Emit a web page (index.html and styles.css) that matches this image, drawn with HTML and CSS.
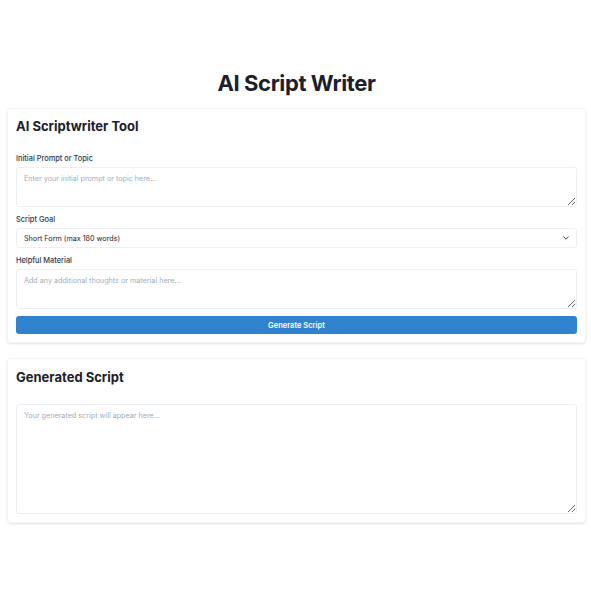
FILE: index.html
```html
<!DOCTYPE html>
<html lang="en">
<head>
<meta charset="utf-8">
<title>AI Script Writer</title>
<link rel="stylesheet" href="styles.css">
</head>
<body>
<main class="page">
  <h1 class="title">AI Script Writer</h1>
  <section class="card">
    <h2 class="card-title">AI Scriptwriter Tool</h2>
    <div class="group">
      <label class="label">Initial Prompt or Topic</label>
      <textarea class="field area-sm" placeholder="Enter your initial prompt or topic here..."></textarea>
    </div>
    <div class="group">
      <label class="label">Script Goal</label>
      <div class="select-wrap">
        <select class="field select">
          <option>Short Form (max 180 words)</option>
        </select>
        <svg class="chevron" viewBox="0 0 10 6" width="6" height="4"><path d="M1 1l4 4 4-4" fill="none" stroke="#2d3748" stroke-width="1.6" stroke-linecap="round" stroke-linejoin="round"/></svg>
      </div>
    </div>
    <div class="group group-last">
      <label class="label">Helpful Material</label>
      <textarea class="field area-sm" placeholder="Add any additional thoughts or material here..."></textarea>
    </div>
    <button class="btn">Generate Script</button>
  </section>
  <section class="card card-2">
    <h2 class="card-title">Generated Script</h2>
    <textarea class="field area-lg" placeholder="Your generated script will appear here..."></textarea>
  </section>
</main>
</body>
</html>
```
FILE: styles.css
```css
* { box-sizing: border-box; }
html, body { margin: 0; padding: 0; background: #ffffff; }
body { font-family: Inter, "Noto Sans", sans-serif; color: #1a202c; }
.page {
  padding: 69px 5px 0 7px;
  display: flex;
  flex-direction: column;
}
.title {
  margin: 0 0 11px;
  font-size: 22px;
  line-height: 28px;
  font-weight: 700;
  letter-spacing: -0.4px;
  text-align: center;
  color: #1a202c;
}
.card {
  border: 1px solid #f3f4f6;
  border-radius: 4px;
  box-shadow: 0 1px 3px rgba(0,0,0,0.08), 0 1px 2px rgba(0,0,0,0.04);
  padding: 9px 8px 8px;
  margin-bottom: 15px;
  display: flex;
  flex-direction: column;
}
.card-2 { padding-top: 10px; }
.card-title {
  margin: 0 0 20px;
  font-size: 13px;
  line-height: 16px;
  font-weight: 700;
  color: #1a202c;
}
.card-2 .card-title { margin-bottom: 19px; }
.group { display: flex; flex-direction: column; margin-bottom: 8px; }
.group-last { margin-bottom: 7px; }
.label {
  font-size: 7.4px;
  line-height: 10px;
  font-weight: 500;
  color: #2d3748;
  margin-bottom: 3px;
}
.field {
  width: 100%;
  border: 1px solid #edf0f3;
  border-radius: 3px;
  font-family: Inter, "Noto Sans", sans-serif;
  font-size: 7.2px;
  color: #2d3748;
  background: #fff;
  outline: none;
}
textarea.field { padding: 6px 7px; resize: vertical; display: block; }
textarea.field::placeholder { color: #a0aec0; }
.area-sm { height: 40px; }
.area-lg { height: 110px; }
.select-wrap { position: relative; }
.select {
  appearance: none;
  -webkit-appearance: none;
  height: 20px;
  padding: 0 7px;
  display: block;
  color: #1a202c;
}
.chevron { position: absolute; right: 8px; top: 8px; }
.btn {
  height: 18px;
  border: none;
  border-radius: 3px;
  background: #3182ce;
  color: #fff;
  font-family: Inter, "Noto Sans", sans-serif;
  font-size: 7.5px;
  font-weight: 600;
  padding: 0;
}
```
